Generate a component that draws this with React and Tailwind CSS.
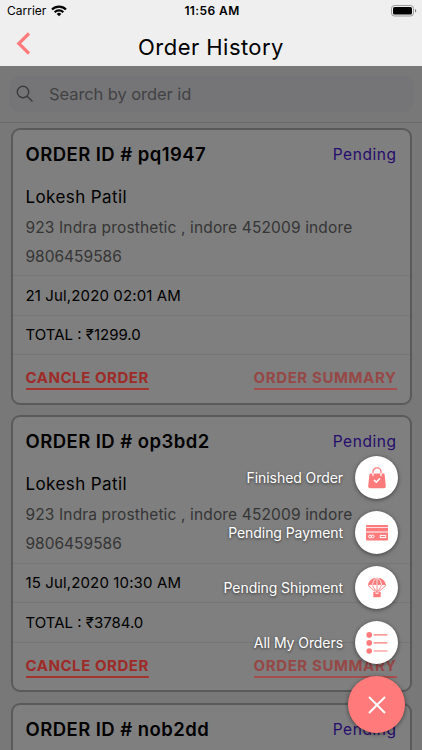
import { useState } from 'react'

const orders = [
  { id: 'pq1947', status: 'Pending', name: 'Lokesh Patil', address: '923 Indra prosthetic , indore 452009 indore', phone: '9806459586', date: '21 Jul,2020 02:01 AM', total: '1299.0' },
  { id: 'op3bd2', status: 'Pending', name: 'Lokesh Patil', address: '923 Indra prosthetic , indore 452009 indore', phone: '9806459586', date: '15 Jul,2020 10:30 AM', total: '3784.0' },
  { id: 'nob2dd', status: 'Pending' },
]

function BagIcon() {
  return (
    <svg width="18" height="22" viewBox="0 0 18 22" fill="none">
      <path d="M2.4 6.5h13.2a1 1 0 0 1 1 .9l1.2 11.700a2 2 0 0 1-2 2.200H2.200a2 2 0 0 1-2-2.200L1.400 7.400a1 1 0 0 1 1-.9z" fill="#ff7a7a" />
      <path d="M5 7V4.800a4 4 0 0 1 8 0V7" stroke="#ff7a7a" strokeWidth="1.3" />
      <path d="M5 6.500V8.600M13 6.500V8.600" stroke="#fff" strokeWidth="1.3" strokeLinecap="round" />
      <path d="M6.400 13.400l1.900 1.800 3.300-3.400" stroke="#fff" strokeWidth="1.5" strokeLinecap="round" />
    </svg>
  )
}

function CardIcon() {
  return (
    <svg width="22" height="16" viewBox="0 0 22 16" fill="none">
      <path d="M1 0h20a1 1 0 0 1 1 1v1H0V1a1 1 0 0 1 1-1zM0 2.800h22v3.600H0zM0 7.400h22v7.200a1 1 0 0 1-1 1H1a1 1 0 0 1-1-1z" fill="#ff7a7a" />
      <circle cx="4" cy="11.5" r="1.4" stroke="#fff" strokeWidth="1" />
      <circle cx="6.7" cy="11.5" r="1.4" stroke="#fff" strokeWidth="1" />
      <rect x="14.3" y="10.4" width="5.4" height="2.2" stroke="#fff" strokeWidth="1" />
    </svg>
  )
}

function ParachuteIcon() {
  return (
    <svg width="20" height="21" viewBox="0 0 20 21" fill="none">
      <path d="M1 8.500C1.300 4 5 .7 10 .7S18.700 4 19 8.500q-2.300-1.500-4.500 0-2.200-1.500-4.500 0-2.300-1.500-4.500 0-2.200-1.500-4.500 0z" fill="#ff7a7a" />
      <path d="M9.500 1C7 2.500 5.500 5 5.500 8.500M10.500 1c2.500 1.500 4 4 4 7.500M10 1v7.500" stroke="#fff" strokeWidth="0.8" />
      <path d="M1.200 8.500L8 14.500M5.500 8.500L9 14.500M10 8.500v6M14.500 8.500L11 14.500M18.800 8.500L12 14.500" stroke="#ff7a7a" strokeWidth="0.9" />
      <path d="M6.300 14.900h7.400v5.300H6.300z" fill="#ff7a7a" />
      <path d="M8.600 14.900v1.900h2.800v-1.900" fill="#fff" />
      <path d="M9.300 13.500h1.400v2.600H9.300z" fill="#ff7a7a" />
    </svg>
  )
}

function ListIcon() {
  return (
    <svg width="22" height="22" viewBox="0 0 22 22" fill="#ff7a7a">
      {[2.9, 10.9, 19].map(y => (
        <g key={y}>
          <circle cx="3.2" cy={y} r="2.8" />
          <rect x="7.5" y={y - 0.6} width="14" height="1.2" rx="0.6" />
        </g>
      ))}
    </svg>
  )
}

const actions = [
  { label: 'Finished Order', Icon: BagIcon },
  { label: 'Pending Payment', Icon: CardIcon },
  { label: 'Pending Shipment', Icon: ParachuteIcon },
  { label: 'All My Orders', Icon: ListIcon },
]

function StatusBar() {
  return (
    <div className="flex h-[21px] items-center justify-between pl-[7px] pr-[5px] pt-px">
      <div className="flex w-[120px] items-center gap-[5px] text-[12px]">
        Carrier
        <svg width="16" height="12" viewBox="0 0 16 12" fill="none" stroke="#000" strokeWidth="2.2">
          <path d="M1 4.500a10 10 0 0 1 14 0M3.700 7.200a6.100 6.100 0 0 1 8.600 0" />
          <path d="M8 11.200L5.700 8.900a3.300 3.300 0 0 1 4.600 0z" fill="#000" stroke="none" />
        </svg>
      </div>
      <span className="text-[12px] font-semibold tracking-[0.4px]">11:56 AM</span>
      <div className="flex w-[120px] justify-end">
        <svg width="26" height="12" viewBox="0 0 26 12">
          <rect x="0.5" y="0.5" width="22" height="10.5" rx="3" fill="none" stroke="#999" />
          <rect x="2" y="2" width="19" height="7.5" rx="1.6" />
          <path d="M24 4v3.500q1.300-.5 1.300-1.750T24 4z" fill="#777" />
        </svg>
      </div>
    </div>
  )
}

function OrderCard({ order }) {
  return (
    <div className="h-[277px] shrink-0 rounded-[9px] border-2 border-[#b4b4b4] bg-white">
      <div className="flex h-[145.5px] flex-col px-[13px] pt-[13px]">
        <div className="flex h-6 items-center justify-between">
          <h2 className="text-[18.5px] font-semibold tracking-[0.45px]">ORDER ID # {order.id}</h2>
          <span className="text-[15.5px] tracking-[0.55px] text-[#4b18d8]">{order.status}</span>
        </div>
        {order.name && (
          <>
            <p className="mt-[18px] h-6 text-[17px] leading-6 tracking-[0.4px]">{order.name}</p>
            <p className="mt-[7px] h-6 whitespace-nowrap text-[15.5px] leading-6 tracking-[0.14px] text-[#6c6c6c]">{order.address}</p>
            <p className="mt-[5px] h-6 text-[15.5px] leading-6 text-[#6c6c6c]">{order.phone}</p>
          </>
        )}
      </div>
      {order.date && (
        <>
          <div className="flex h-[39.5px] items-center border-t border-[#ececec] px-[13px] pt-px text-[15px] tracking-[0.13px]">{order.date}</div>
          <div className="flex h-[39.5px] items-center border-t border-[#ececec] px-[13px] pt-px text-[15px]">TOTAL : ₹{order.total}</div>
          <div className="flex items-start justify-between border-t border-[#ececec] px-[13px] pt-3">
            {/* links stay brighter than the dimmed card */}
            <button className="relative z-10 h-[23px] border-b-2 border-[#a5342f] text-[15px] font-bold tracking-[0.55px] text-[#9e2b27]">CANCLE ORDER</button>
            <button className="relative z-10 h-[23px] border-b-2 border-[#a84e4c] text-[15px] font-bold tracking-[0.6px] text-[#964846]">ORDER SUMMARY</button>
          </div>
        </>
      )}
    </div>
  )
}

export default function App() {
  const [open, setOpen] = useState(true)

  return (
    <div className="relative flex h-[750px] w-[422px] flex-col overflow-hidden bg-[#f0f0f0] font-['Inter',sans-serif] text-black">
      {/* Header */}
      <header className="h-[65.5px] shrink-0 bg-[#efefef]">
        <StatusBar />
        <div className="grid grid-cols-[1fr_auto_1fr] items-start">
          <button className="ml-4 mt-[11px] w-fit">
            <svg width="16" height="23" viewBox="0 0 16 23" fill="none" stroke="#ff7a7a" strokeWidth="3.2">
              <path d="M13 1.500L2.800 11.500 13 21.500" />
            </svg>
          </button>
          <h1 className="mt-[10px] text-[22px] leading-8 tracking-[0.45px]">Order History</h1>
        </div>
      </header>

      <main className="relative min-h-0 flex-1 overflow-hidden">
        {/* Search */}
        <div className="h-[57px] border-b border-[#d0d0d0] px-[8.5px] pt-[10.5px]">
          <div className="flex h-9 items-center gap-[15px] rounded-[10px] bg-[#ebebef] pl-[7.5px] text-[16.5px] tracking-[-0.08px] text-[#858589]">
            <svg width="18" height="18" viewBox="0 0 18 18" fill="none" stroke="#77777b" strokeWidth="1.4">
              <circle cx="7" cy="7" r="5.7" />
              <path d="M11.200 11.200L16.500 16.500" />
            </svg>
            Search by order id
          </div>
        </div>

        {/* Orders */}
        <div className="flex flex-col gap-[10.5px] px-[10.5px] pt-[5px]">
          {orders.map(o => <OrderCard key={o.id} order={o} />)}
        </div>

        {open && <div className="absolute inset-0 bg-black/50" />}
      </main>

      {/* Floating actions */}
      <div className="absolute bottom-[17px] right-[17px] z-20 flex flex-col items-end">
        {open && (
          <div className="mb-[12px] mr-[7px] flex flex-col gap-3">
            {actions.map(({ label, Icon }) => (
              <button key={label} className="flex h-[43px] items-center justify-end gap-[12px]">
                <span className="text-[14px] tracking-[-0.07px] text-white [text-shadow:0_1px_3px_rgba(0,0,0,0.6)]">{label}</span>
                <span className="flex size-[43px] items-center justify-center rounded-full bg-white shadow-[0_1px_4px_rgba(0,0,0,0.5)]">
                  <Icon />
                </span>
              </button>
            ))}
          </div>
        )}
        <button
          onClick={() => setOpen(!open)}
          className="flex size-[57px] items-center justify-center rounded-full bg-[#ff7a7a] shadow-[0_1px_4px_rgba(0,0,0,0.5)]"
        >
          <svg width="18" height="18" viewBox="0 0 18 18" stroke="#fff" strokeWidth="1.9">
            <path d="M1 1l16 16M17 1L1 17" />
          </svg>
        </button>
      </div>
    </div>
  )
}
